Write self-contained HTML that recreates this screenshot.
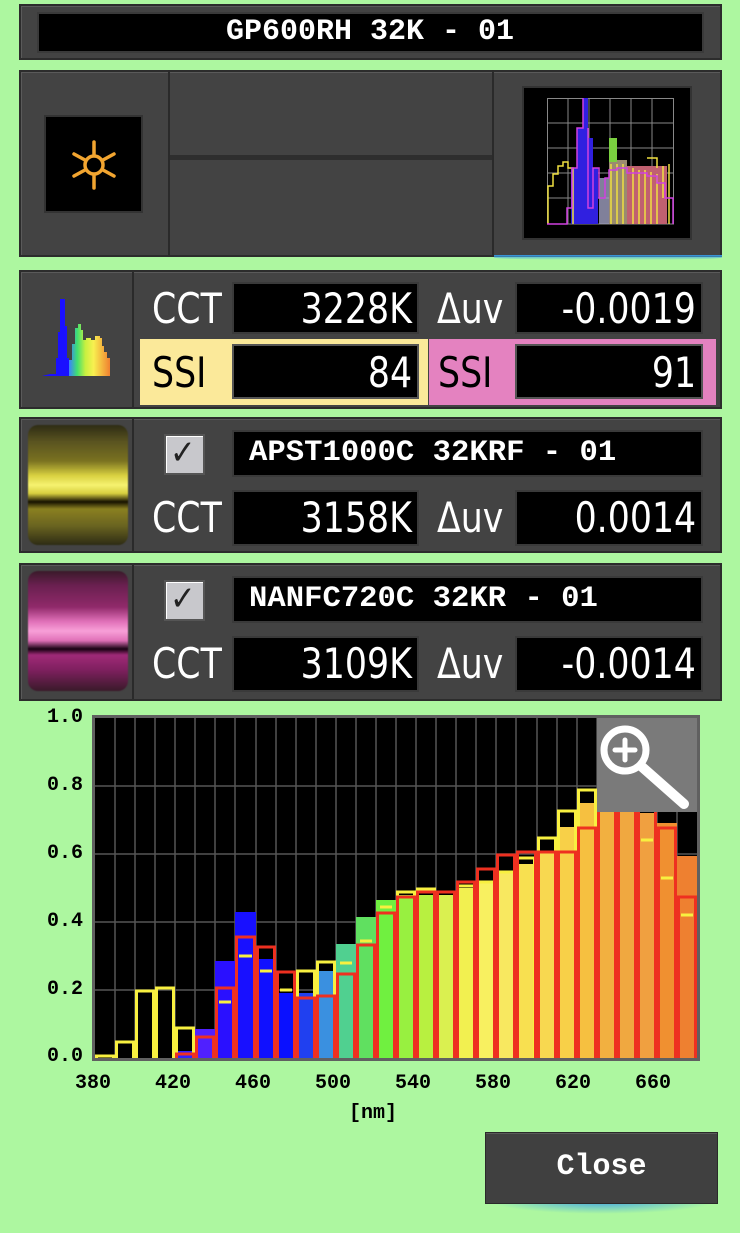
<!DOCTYPE html>
<html><head><meta charset="utf-8"><style>
*{margin:0;padding:0;box-sizing:border-box}
body{width:740px;height:1233px;background:#adf7a0;position:relative;overflow:hidden;font-family:"DejaVu Sans Condensed","Liberation Sans Narrow","Liberation Sans",sans-serif;color:#fff}
.a{position:absolute}
.pan{background:#434343;border:2px solid #2c2c2c;box-shadow:inset 1px 1px 0 #5a5a5a}
.blk{background:#000;border:2px solid #3a3a3a}
.t{position:absolute;white-space:nowrap;font-weight:normal}
.big{font-size:42px;transform:scaleX(.92);transform-origin:left center;line-height:1}
.bigr{font-size:42px;transform:scaleX(.92);transform-origin:right center;line-height:1;text-align:right}
.nm{font-size:30px;font-weight:bold;transform:scaleX(1.02);transform-origin:left center;font-family:"Liberation Mono","DejaVu Sans Mono",monospace;line-height:1}
.chk{background:#c8c8cc;border:2px solid #555;box-shadow:inset 1px 1px 0 #fff}
.lab{font-family:"Liberation Mono",monospace;font-weight:bold;color:#000;font-size:20px}
</style></head><body>
<!-- header -->
<div class="a pan" style="left:19px;top:4px;width:703px;height:56px"></div>
<div class="a blk" style="left:37px;top:12px;width:667px;height:41px"></div>
<div class="t nm" style="left:0;top:17px;width:740px;text-align:center;transform:none;font-size:30px"><span style="display:inline-block;transform:scaleX(1.0)">GP600RH 32K - 01</span></div>

<!-- panel 2 -->
<div class="a pan" style="left:19px;top:70px;width:703px;height:187px"></div>
<div class="a" style="left:168px;top:70px;width:2px;height:187px;background:#2a2a2a"></div>
<div class="a" style="left:492px;top:70px;width:2px;height:187px;background:#2a2a2a"></div>
<div class="a" style="left:170px;top:155px;width:322px;height:5px;background:#2e2e2e"></div>
<div class="a" style="left:494px;top:255px;width:228px;height:5px;background:linear-gradient(#3aa0e8,rgba(58,160,232,0));border-radius:0 0 50% 50%"></div>
<div class="a" style="left:44px;top:115px;width:99px;height:98px;background:#000;border:2px solid #333"></div>
<svg class="a" style="left:69px;top:138px" width="50" height="54" viewBox="0 0 50 54"><g stroke="#f2a530" stroke-width="3.5" fill="none" stroke-linecap="round"><circle cx="25" cy="27" r="9"/><line x1="25" y1="4" x2="25" y2="17"/><line x1="25" y1="37" x2="25" y2="50"/><line x1="5" y1="16" x2="16" y2="22"/><line x1="34" y1="32" x2="45" y2="38"/><line x1="5" y1="38" x2="16" y2="32"/><line x1="34" y1="22" x2="45" y2="16"/></g></svg>
<div class="a" style="left:522px;top:86px;width:170px;height:154px;background:#000;border:2px solid #333"></div>
<svg class="a" style="left:547px;top:98px" width="127" height="127" viewBox="0 0 127 127">
<g stroke="#888" stroke-width="1"><path d="M0.5 0V126M21 0V126M42 0V126M63 0V126M84 0V126M105 0V126M126.5 0V126M0 0.5H127M0 25H127M0 50H127M0 75H127M0 100H127M0 126H127"/></g>
<g fill="#3020e0"><rect x="24" y="70" width="6" height="56"/><rect x="30" y="30" width="6" height="96"/><rect x="36" y="0" width="5" height="126"/><rect x="41" y="40" width="5" height="86"/><rect x="46" y="70" width="5" height="56"/></g>
<g fill="#a0a0c0" opacity=".8"><rect x="52" y="80" width="10" height="46"/></g>
<g fill="#9a8a70"><rect x="62" y="62" width="18" height="64"/></g>
<rect x="62" y="40" width="8" height="24" fill="#7ad040"/>
<g fill="#c06070"><rect x="80" y="68" width="40" height="58"/></g>
<g fill="none" stroke="#f0e040" stroke-width="1.5"><path d="M1 126V88H6V76H11V68H16V64H21V70H26V126M100 60H110V70"/><path d="M64 126V66M70 126V66M76 126V66M86 126V70M92 126V72M98 126V72M104 126V74M110 126V76M122 126V66M116 68V100"/></g>
<g fill="none" stroke="#d040e0" stroke-width="1.5"><path d="M0 126H20V110H25V70H30V30H36V0M41 30V110H46V70H52V100H58V80H62V72H70V70H80V75H100V78H110V85H118V100H126V126"/></g>
</svg>

<!-- panel 3 -->
<div class="a pan" style="left:19px;top:270px;width:703px;height:139px"></div>
<div class="a" style="left:132px;top:272px;width:2px;height:135px;background:#2a2a2a"></div>
<svg class="a" style="left:38px;top:298px" width="80" height="80" viewBox="0 0 80 80"><defs><linearGradient id="rb" x1="0" x2="1"><stop offset="0" stop-color="#3a80ff"/><stop offset=".2" stop-color="#40e070"/><stop offset=".4" stop-color="#c8f040"/><stop offset=".6" stop-color="#f8f050"/><stop offset="1" stop-color="#f08030"/></linearGradient></defs>
<path d="M4 78L12 76H18V60H20V34H22V1H27V28H29V60H31V78Z" fill="#1a10ff"/>
<path d="M31 78V62H34V46H37V30H40V26H43V32H45V42H48V40H53V42H57V38H62V40H64V48H66V54H69V60H72V78Z" fill="url(#rb)"/></svg>
<div class="t big" style="left:152px;top:288px">CCT</div>
<div class="a blk" style="left:232px;top:282px;width:187px;height:52px"></div>
<div class="t bigr" style="right:328px;top:288px">3228K</div>
<div class="t big" style="left:437px;top:288px">Δuv</div>
<div class="a blk" style="left:515px;top:282px;width:188px;height:52px"></div>
<div class="t bigr" style="right:44px;top:288px">-0.0019</div>
<div class="a" style="left:140px;top:339px;width:288px;height:66px;background:#fbe99a"></div>
<div class="a" style="left:429px;top:339px;width:287px;height:66px;background:#e482c0"></div>
<div class="t big" style="left:152px;top:352px;color:#000">SSI</div>
<div class="a blk" style="left:232px;top:344px;width:187px;height:55px;border-color:#555"></div>
<div class="t bigr" style="right:328px;top:352px">84</div>
<div class="t big" style="left:438px;top:352px;color:#000">SSI</div>
<div class="a blk" style="left:515px;top:344px;width:188px;height:55px;border-color:#555"></div>
<div class="t bigr" style="right:44px;top:352px">91</div>

<!-- panel 4 -->
<div class="a pan" style="left:19px;top:417px;width:703px;height:136px"></div>
<div class="a" style="left:132px;top:419px;width:2px;height:132px;background:#2a2a2a"></div>
<div class="a" style="left:28px;top:425px;width:100px;height:120px;background:linear-gradient(#2e2c14 0%,#5a5420 14%,#7a7220 30%,#d8d040 42%,#f6f270 50%,#d8d040 57%,#151000 64%,#8a8020 70%,#6a6420 84%,#2e2c14 100%);border-radius:10px;filter:blur(.6px)"></div>
<div class="a chk" style="left:164px;top:434px;width:41px;height:41px"></div>
<div class="t" style="left:170px;top:433px;font-size:34px;color:#222">✓</div>
<div class="a blk" style="left:232px;top:430px;width:471px;height:47px"></div>
<div class="t nm" style="left:249px;top:438px">APST1000C 32KRF - 01</div>
<div class="t big" style="left:152px;top:497px">CCT</div>
<div class="a blk" style="left:232px;top:490px;width:187px;height:56px"></div>
<div class="t bigr" style="right:328px;top:497px">3158K</div>
<div class="t big" style="left:437px;top:497px">Δuv</div>
<div class="a blk" style="left:515px;top:490px;width:188px;height:56px"></div>
<div class="t bigr" style="right:44px;top:497px">0.0014</div>

<!-- panel 5 -->
<div class="a pan" style="left:19px;top:563px;width:703px;height:138px"></div>
<div class="a" style="left:132px;top:565px;width:2px;height:134px;background:#2a2a2a"></div>
<div class="a" style="left:28px;top:571px;width:100px;height:120px;background:linear-gradient(#3a1a2a 0%,#6a2050 12%,#902a6a 30%,#e070b8 42%,#f8a0d8 50%,#e070b8 58%,#150010 65%,#a02a78 70%,#802060 82%,#3a1a2a 100%);border-radius:10px;filter:blur(.6px)"></div>
<div class="a chk" style="left:164px;top:580px;width:41px;height:41px"></div>
<div class="t" style="left:170px;top:579px;font-size:34px;color:#222">✓</div>
<div class="a blk" style="left:232px;top:576px;width:471px;height:47px"></div>
<div class="t nm" style="left:249px;top:584px">NANFC720C 32KR - 01</div>
<div class="t big" style="left:152px;top:643px">CCT</div>
<div class="a blk" style="left:232px;top:636px;width:187px;height:56px"></div>
<div class="t bigr" style="right:328px;top:643px">3109K</div>
<div class="t big" style="left:437px;top:643px">Δuv</div>
<div class="a blk" style="left:515px;top:636px;width:188px;height:56px"></div>
<div class="t bigr" style="right:44px;top:643px">-0.0014</div>

<!-- chart -->
<div class="a" style="left:92px;top:715px;width:608px;height:346px;background:#606060"></div>
<svg class="a" style="left:95px;top:718px" width="602" height="340" viewBox="0 0 602 340">
<rect width="602" height="340" fill="#000"/>
<g stroke="#555" stroke-width="1.5"><path d="M20 0V340M40 0V340M60 0V340M80 0V340M100 0V340M120 0V340M140 0V340M161 0V340M181 0V340M201 0V340M221 0V340M241 0V340M261 0V340M281 0V340M301 0V340M321 0V340M341 0V340M361 0V340M381 0V340M401 0V340M421 0V340M442 0V340M462 0V340M482 0V340M502 0V340M522 0V340M542 0V340M562 0V340M582 0V340M0 68H602M0 136H602M0 204H602M0 272H602"/></g>
<g>
<rect x="80" y="333" width="20" height="7" fill="#3020ff"/>
<rect x="100" y="311" width="20" height="29" fill="#5020ff"/>
<rect x="120" y="243" width="20" height="97" fill="#2a10ff"/>
<rect x="140" y="194" width="21" height="146" fill="#1810ff"/>
<rect x="161" y="241" width="20" height="99" fill="#1010ff"/>
<rect x="181" y="275" width="20" height="65" fill="#0a10ff"/>
<rect x="201" y="275" width="20" height="65" fill="#2040f0"/>
<rect x="221" y="253" width="20" height="87" fill="#3a90e0"/>
<rect x="241" y="226" width="20" height="114" fill="#50d090"/>
<rect x="261" y="199" width="20" height="141" fill="#60e060"/>
<rect x="281" y="182" width="20" height="158" fill="#70f040"/>
<rect x="301" y="177" width="20" height="163" fill="#98f040"/>
<rect x="321" y="177" width="20" height="163" fill="#b8f040"/>
<rect x="341" y="177" width="20" height="163" fill="#daf050"/>
<rect x="361" y="170" width="20" height="170" fill="#f2f050"/>
<rect x="381" y="165" width="20" height="175" fill="#f8f060"/>
<rect x="401" y="155" width="20" height="185" fill="#f8e860"/>
<rect x="421" y="146" width="21" height="194" fill="#f8e050"/>
<rect x="442" y="133" width="20" height="207" fill="#f8d850"/>
<rect x="462" y="109" width="20" height="231" fill="#f8d048"/>
<rect x="482" y="85" width="20" height="255" fill="#f6c040"/>
<rect x="502" y="82" width="20" height="258" fill="#f2b040"/>
<rect x="522" y="75" width="20" height="265" fill="#f0a840"/>
<rect x="542" y="95" width="20" height="245" fill="#f0a040"/>
<rect x="562" y="105" width="20" height="235" fill="#f09030"/>
<rect x="582" y="138" width="20" height="202" fill="#ee8030"/>
</g>
<g fill="none" stroke="#f8f040" stroke-width="3">
<rect x="1.5" y="338" width="17" height="4"/>
<rect x="21.5" y="324" width="17" height="18"/>
<rect x="41.5" y="273" width="17" height="69"/>
<rect x="61.5" y="270" width="17" height="72"/>
<rect x="81.5" y="310" width="17" height="32"/>
<rect x="202.5" y="253" width="17" height="89"/>
<rect x="222.5" y="244" width="17" height="98"/>
<rect x="302.5" y="174" width="17" height="168"/>
<rect x="322.5" y="171" width="17" height="171"/>
<rect x="342.5" y="174" width="17" height="168"/>
<rect x="362.5" y="168" width="17" height="174"/>
<rect x="382.5" y="164" width="17" height="178"/>
<rect x="402.5" y="154" width="17" height="188"/>
<rect x="422.5" y="140" width="17" height="202"/>
<rect x="443.5" y="120" width="17" height="222"/>
<rect x="463.5" y="93" width="17" height="249"/>
<rect x="483.5" y="72" width="17" height="270"/>
<path d="M124 284H136M144 238H157M165 253H177M185 272H197M245 245H257M265 223H277M285 189H297M546 122H558M566 160H578M586 197H598"/>
</g>
<g fill="none" stroke="#ee3020" stroke-width="3">
<rect x="81.5" y="336" width="17" height="6"/>
<rect x="101.5" y="319" width="17" height="23"/>
<rect x="121.5" y="270" width="17" height="72"/>
<rect x="141.5" y="219" width="18" height="123"/>
<rect x="162.5" y="229" width="17" height="113"/>
<rect x="182.5" y="254" width="17" height="88"/>
<rect x="202.5" y="280" width="17" height="62"/>
<rect x="222.5" y="278" width="17" height="64"/>
<rect x="242.5" y="256" width="17" height="86"/>
<rect x="262.5" y="227" width="17" height="115"/>
<rect x="282.5" y="195" width="17" height="147"/>
<rect x="302.5" y="179" width="17" height="163"/>
<rect x="322.5" y="174" width="17" height="168"/>
<rect x="342.5" y="174" width="17" height="168"/>
<rect x="362.5" y="164" width="17" height="178"/>
<rect x="382.5" y="151" width="17" height="191"/>
<rect x="402.5" y="137" width="17" height="205"/>
<rect x="422.5" y="134" width="18" height="208"/>
<rect x="443.5" y="134" width="17" height="208"/>
<rect x="463.5" y="134" width="17" height="208"/>
<rect x="483.5" y="110" width="17" height="232"/>
<rect x="503.5" y="86" width="17" height="256"/>
<rect x="523.5" y="86" width="17" height="256"/>
<rect x="543.5" y="86" width="17" height="256"/>
<rect x="563.5" y="110" width="17" height="232"/>
<rect x="583.5" y="179" width="17" height="163"/>
</g>
<rect x="502" y="0" width="100" height="94" fill="#7a7a7a"/>
<g stroke="#fff" fill="none" stroke-linecap="round"><circle cx="530" cy="32" r="21" stroke-width="7"/><line x1="546" y1="48" x2="589" y2="86" stroke-width="10"/><path d="M520 32H540M530 22V42" stroke-width="5"/></g>
</svg>
<div class="t lab" style="left:47px;top:706px">1.0</div>
<div class="t lab" style="left:47px;top:774px">0.8</div>
<div class="t lab" style="left:47px;top:842px">0.6</div>
<div class="t lab" style="left:47px;top:910px">0.4</div>
<div class="t lab" style="left:47px;top:978px">0.2</div>
<div class="t lab" style="left:47px;top:1045px">0.0</div>
<div class="t lab" style="left:75px;top:1072px">380</div>
<div class="t lab" style="left:155px;top:1072px">420</div>
<div class="t lab" style="left:235px;top:1072px">460</div>
<div class="t lab" style="left:315px;top:1072px">500</div>
<div class="t lab" style="left:395px;top:1072px">540</div>
<div class="t lab" style="left:475px;top:1072px">580</div>
<div class="t lab" style="left:555px;top:1072px">620</div>
<div class="t lab" style="left:635px;top:1072px">660</div>
<div class="t lab" style="left:349px;top:1102px">[nm]</div>

<!-- close -->
<div class="a" style="left:487px;top:1200px;width:231px;height:14px;background:radial-gradient(ellipse at 50% 0,#3aa0e8 0,rgba(58,160,232,0) 70%)"></div>
<div class="a" style="left:485px;top:1132px;width:233px;height:72px;background:#404040;border:1px solid #2a2a2a;box-shadow:inset 0 1px 0 #5a5a5a"></div>
<div class="t" style="left:485px;top:1150px;width:233px;text-align:center;font-family:'Liberation Mono',monospace;font-weight:bold;font-size:30px">Close</div>
</body></html>
